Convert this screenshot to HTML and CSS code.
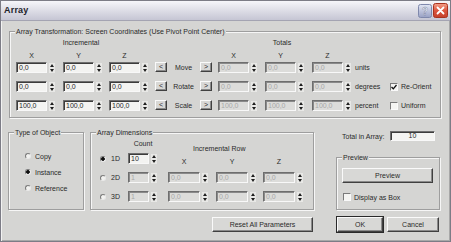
FILE: index.html
```html
<!DOCTYPE html>
<html>
<head>
<meta charset="utf-8">
<title>Array</title>
<link rel="stylesheet" href="styles.css">
</head>
<body>
<div class="window">
  <div class="titlebar">
    <span class="title">Array</span>
    <svg class="tb-help" width="14" height="14" viewBox="0 0 14 14">
      <defs>
        <linearGradient id="hg" x1="0" y1="0" x2="0" y2="1">
          <stop offset="0" stop-color="#e2e6f4"/>
          <stop offset="1" stop-color="#98a0c4"/>
        </linearGradient>
      </defs>
      <rect x="0.5" y="0.5" width="13" height="13" rx="2" fill="url(#hg)" stroke="#7f88ac"/>
      <text x="7" y="10.5" text-anchor="middle" font-family="Liberation Sans, Arial, sans-serif" font-size="10" font-weight="bold" fill="#f6f6fc" stroke="#6c7494" stroke-width="0.4">?</text>
    </svg>
    <svg class="tb-close" width="15" height="15" viewBox="0 0 15 15">
      <defs>
        <linearGradient id="cg" x1="0" y1="0" x2="0" y2="1">
          <stop offset="0" stop-color="#f3a08a"/>
          <stop offset="0.5" stop-color="#dc5640"/>
          <stop offset="1" stop-color="#c43e2a"/>
        </linearGradient>
      </defs>
      <rect x="0.5" y="0.5" width="14" height="14" rx="2" fill="url(#cg)" stroke="#a8321f"/>
      <path d="M4.5 4.5 L10.5 10.5 M10.5 4.5 L4.5 10.5" stroke="#ffffff" stroke-width="1.8" stroke-linecap="round"/>
    </svg>
  </div>
  <div class="body">
    <div class="group transform">
      <span class="legend">Array Transformation: Screen Coordinates (Use Pivot Point Center)</span>
      <div class="trow hdr">
        <span class="h-inc">Incremental</span>
        <span class="h-tot">Totals</span>
      </div>
      <div class="trow axes">
        <span class="ax c1">X</span><span class="ax c2">Y</span><span class="ax c3">Z</span>
        <span class="ax c7">X</span><span class="ax c8">Y</span><span class="ax c9">Z</span>
      </div>
      <div class="trow data">
        <div class="spin"><span class="fld">0,0</span><span class="sp"></span></div>
        <div class="spin"><span class="fld">0,0</span><span class="sp"></span></div>
        <div class="spin"><span class="fld">0,0</span><span class="sp"></span></div>
        <span class="btn sm">&lt;</span>
        <span class="op">Move</span>
        <span class="btn sm">&gt;</span>
        <div class="spin"><span class="fld dis">0,0</span><span class="sp"></span></div>
        <div class="spin"><span class="fld dis">0,0</span><span class="sp"></span></div>
        <div class="spin"><span class="fld dis">0,0</span><span class="sp"></span></div>
        <span class="unit">units</span>
        <span></span>
      </div>
      <div class="trow data">
        <div class="spin"><span class="fld">0,0</span><span class="sp"></span></div>
        <div class="spin"><span class="fld">0,0</span><span class="sp"></span></div>
        <div class="spin"><span class="fld">0,0</span><span class="sp"></span></div>
        <span class="btn sm">&lt;</span>
        <span class="op">Rotate</span>
        <span class="btn sm">&gt;</span>
        <div class="spin"><span class="fld dis">0,0</span><span class="sp"></span></div>
        <div class="spin"><span class="fld dis">0,0</span><span class="sp"></span></div>
        <div class="spin"><span class="fld dis">0,0</span><span class="sp"></span></div>
        <span class="unit">degrees</span>
        <label class="chkrow"><span class="chk"><svg width="6" height="6" viewBox="0 0 6 6"><path d="M0.5 3 L2.3 4.8 L5.5 1" stroke="#111" stroke-width="1.3" fill="none"/></svg></span>Re-Orient</label>
      </div>
      <div class="trow data last">
        <div class="spin"><span class="fld">100,0</span><span class="sp"></span></div>
        <div class="spin"><span class="fld">100,0</span><span class="sp"></span></div>
        <div class="spin"><span class="fld">100,0</span><span class="sp"></span></div>
        <span class="btn sm">&lt;</span>
        <span class="op">Scale</span>
        <span class="btn sm">&gt;</span>
        <div class="spin"><span class="fld dis">100,0</span><span class="sp"></span></div>
        <div class="spin"><span class="fld dis">100,0</span><span class="sp"></span></div>
        <div class="spin"><span class="fld dis">100,0</span><span class="sp"></span></div>
        <span class="unit">percent</span>
        <label class="chkrow"><span class="chk"></span>Uniform</label>
      </div>
    </div>

    <div class="lower">
      <div class="group type">
        <span class="legend">Type of Object</span>
        <label class="radrow"><span class="rad"></span>Copy</label>
        <label class="radrow"><span class="rad on"></span>Instance</label>
        <label class="radrow"><span class="rad"></span>Reference</label>
      </div>

      <div class="dims-col">
        <div class="group dims">
          <span class="legend">Array Dimensions</span>
          <div class="drow dhdr">
            <span class="count-lbl">Count</span>
            <span class="inc-row">Incremental Row</span>
          </div>
          <div class="drow d1">
            <label class="radrow"><span class="rad on"></span>1D</label>
            <div class="spin"><span class="fld cnt">10</span><span class="sp"></span></div>
            <span class="dax">X</span>
            <span class="dax">Y</span>
            <span class="dax">Z</span>
          </div>
          <div class="drow d2">
            <label class="radrow"><span class="rad"></span>2D</label>
            <div class="spin"><span class="fld cnt dis">1</span><span class="sp"></span></div>
            <div class="spin"><span class="fld dfld dis">0,0</span><span class="sp"></span></div>
            <div class="spin"><span class="fld dfld dis">0,0</span><span class="sp"></span></div>
            <div class="spin"><span class="fld dfld dis">0,0</span><span class="sp"></span></div>
          </div>
          <div class="drow d3">
            <label class="radrow"><span class="rad"></span>3D</label>
            <div class="spin"><span class="fld cnt dis">1</span><span class="sp"></span></div>
            <div class="spin"><span class="fld dfld dis">0,0</span><span class="sp"></span></div>
            <div class="spin"><span class="fld dfld dis">0,0</span><span class="sp"></span></div>
            <div class="spin"><span class="fld dfld dis">0,0</span><span class="sp"></span></div>
          </div>
        </div>
        <span class="btn push reset">Reset All Parameters</span>
      </div>

      <div class="right-col">
        <div class="total-row">
          <span class="total-lbl">Total in Array:</span>
          <span class="fld total">10</span>
        </div>
        <div class="group preview">
          <span class="legend">Preview</span>
          <span class="btn push prev-btn">Preview</span>
          <label class="chkrow box"><span class="chk"></span>Display as Box</label>
        </div>
        <div class="okrow">
          <span class="btn push ok">OK</span>
          <span class="btn push cancel">Cancel</span>
        </div>
      </div>
    </div>
  </div>
</div>
</body>
</html>
```
FILE: styles.css
```css
* { box-sizing: border-box; }
html, body { margin: 0; padding: 0; background: #d5d5d3; }
body {
  font-family: "Liberation Sans", Arial, sans-serif;
  font-size: 7px;
  line-height: 9px;
  color: #2a2a2a;
}

.window {
  width: 451px;
  height: 242px;
  border: 1px solid #7c7c86;
  display: flex;
  flex-direction: column;
  background: #d5d5d3;
  overflow: hidden;
}

.titlebar {
  height: 20px;
  flex: none;
  display: flex;
  align-items: center;
  padding: 0 2px 0 3px;
  background: linear-gradient(#f6f6fa, #e2e2ea 40%, #c6c6d4);
  border-bottom: 1px solid #a4a4b2;
}
.title {
  flex: 1;
  font-size: 9px;
  font-weight: bold;
  color: #22222a;
  letter-spacing: 0.2px;
}
.tb-help { flex: none; display: block; margin-right: 1px; }
.tb-close { flex: none; display: block; }

.body {
  flex: 1;
  padding-left: 7px;
  box-shadow: inset 1px 0 0 #f2f2f2, inset -1px 0 0 #a8a8a8, inset 0 -1px 0 #a8a8a8;
}

/* group boxes */
.group {
  position: relative;
  border: 1px solid #9e9e9e;
  box-shadow: inset 1px 1px 0 #f6f6f6, 1px 1px 0 #f6f6f6;
}
.legend {
  position: absolute;
  top: -5px;
  left: 5px;
  padding: 0 1px;
  background: #d5d5d3;
  white-space: nowrap;
}

/* transform group */
.transform {
  margin-top: 10px;
  margin-left: 1px;
  width: 432px;
  height: 87px;
  padding: 4px 0 6px 6px;
}
.trow {
  display: grid;
  grid-template-columns: 47px 46px 46px 12px 33px 18px 47px 47px 43px 35px 1fr;
  align-items: start;
}
.trow.hdr { height: 12px; align-items: center; }
.trow.axes { height: 14px; align-items: center; }
.trow.data { height: 11px; margin-bottom: 8px; }
.trow.data.last { margin-bottom: 0; }
.h-inc { grid-column: 1 / 4; text-align: center; padding-right: 9px; }
.h-tot { grid-column: 7 / 10; text-align: center; padding-right: 9px; }
.ax { width: 31px; text-align: center; }
.c1 { grid-column: 1; } .c2 { grid-column: 2; } .c3 { grid-column: 3; }
.c7 { grid-column: 7; } .c8 { grid-column: 8; } .c9 { grid-column: 9; }

.spin { display: flex; align-items: center; }
.fld {
  display: block;
  width: 31px;
  height: 11px;
  padding-left: 2px;
  line-height: 9px;
  background: #f3f3f1;
  border: 1px solid;
  border-color: #6e6e6e #f8f8f8 #f8f8f8 #6e6e6e;
  box-shadow: inset 1px 1px 0 #3c3c3c;
  white-space: nowrap;
  overflow: hidden;
}
.fld.dis { background: #dcdcda; color: #a8a8a8; box-shadow: inset 1px 1px 0 #8a8a8a; }
.sp {
  width: 6px;
  height: 10px;
  margin-left: 2px;
  display: flex;
  flex-direction: column;
  justify-content: space-between;
  align-items: center;
  padding: 1px 0;
  background: #e8e8e6;
}
.sp::before {
  content: "";
  border-left: 2px solid transparent;
  border-right: 2px solid transparent;
  border-bottom: 3px solid #1e1e1e;
}
.sp::after {
  content: "";
  border-left: 2px solid transparent;
  border-right: 2px solid transparent;
  border-top: 3px solid #1e1e1e;
}

.btn {
  display: flex;
  align-items: center;
  justify-content: center;
  background: #d8d8d6;
  border: 1px solid;
  border-color: #fafafa #404040 #404040 #fafafa;
  box-shadow: inset -1px -1px 0 #8a8a8a;
  white-space: nowrap;
}
.btn.sm { width: 12px; height: 10px; line-height: 8px; }
.op { text-align: center; line-height: 11px; }
.unit { line-height: 11px; }

.chkrow { display: flex; align-items: center; white-space: nowrap; }
.trow .chkrow { height: 11px; }
.chk {
  width: 8px;
  height: 8px;
  margin-right: 3px;
  display: flex;
  align-items: center;
  justify-content: center;
  background: #f4f4f2;
  border: 1px solid;
  border-color: #7a7a7a #fafafa #fafafa #7a7a7a;
}

/* lower */
.lower {
  display: flex;
  align-items: flex-start;
  margin-top: 14px;
}
.type {
  width: 76px;
  height: 78px;
  margin-right: 6px;
  padding: 18px 0 0 16px;
  display: flex;
  flex-direction: column;
  gap: 6px;
}
.radrow { display: flex; align-items: center; height: 10px; white-space: nowrap; }
.rad {
  width: 6px;
  height: 6px;
  margin-right: 4px;
  border-radius: 50%;
  background: #f2f2f0;
  border: 1px solid;
  border-color: #7a7a7a #e8e8e8 #e8e8e8 #7a7a7a;
}
.rad.on { background: radial-gradient(circle, #101010 0 1.6px, #f2f2f0 2px); }

.dims-col {
  width: 224px;
  margin-right: 22px;
  display: flex;
  flex-direction: column;
}
.dims {
  width: 224px;
  height: 78px;
  padding: 6px 0 0 9px;
}
.drow {
  display: grid;
  grid-template-columns: 28px 40px 48px 47px 1fr;
  align-items: start;
}
.dhdr { height: 14px; }
.d1, .d2 { height: 19px; }
.d3 { height: 11px; }
.count-lbl { grid-column: 2; width: 30px; text-align: center; line-height: 10px; }
.inc-row { grid-column: 3 / 6; align-self: end; margin-left: 25px; }
.dax { width: 32px; text-align: center; margin-top: 4px; line-height: 10px; }
.fld.cnt { width: 21px; height: 11px; }
.fld.dfld { width: 32px; }
.drow .radrow { height: 11px; }
.drow .rad { margin-right: 5px; }
.reset {
  align-self: flex-end;
  width: 101px;
  height: 15px;
  margin-top: 7px;
  margin-right: 1px;
}

.right-col {
  width: 104px;
  margin-top: -1px;
  display: flex;
  flex-direction: column;
}
.total-row {
  height: 10px;
  display: flex;
  align-items: center;
}
.total-lbl { margin-left: 6px; }
.fld.total {
  width: 45px;
  height: 10px;
  margin-left: auto;
  margin-right: 5px;
  text-align: center;
  padding-left: 0;
  line-height: 8px;
  background: #f4f4f2;
}
.preview {
  margin-top: 16px;
  width: 104px;
  height: 53px;
  padding: 10px 0 0 5px;
}
.prev-btn { width: 91px; height: 15px; }
.chkrow.box { margin-top: 10px; margin-left: 1px; height: 8px; }
.okrow {
  display: flex;
  margin-top: 7px;
  margin-left: 1px;
}
.ok {
  width: 46px;
  height: 15px;
  outline: 1px solid #2a2a2a;
  outline-offset: 0;
}
.cancel { width: 52px; height: 15px; margin-left: 4px; }
```
